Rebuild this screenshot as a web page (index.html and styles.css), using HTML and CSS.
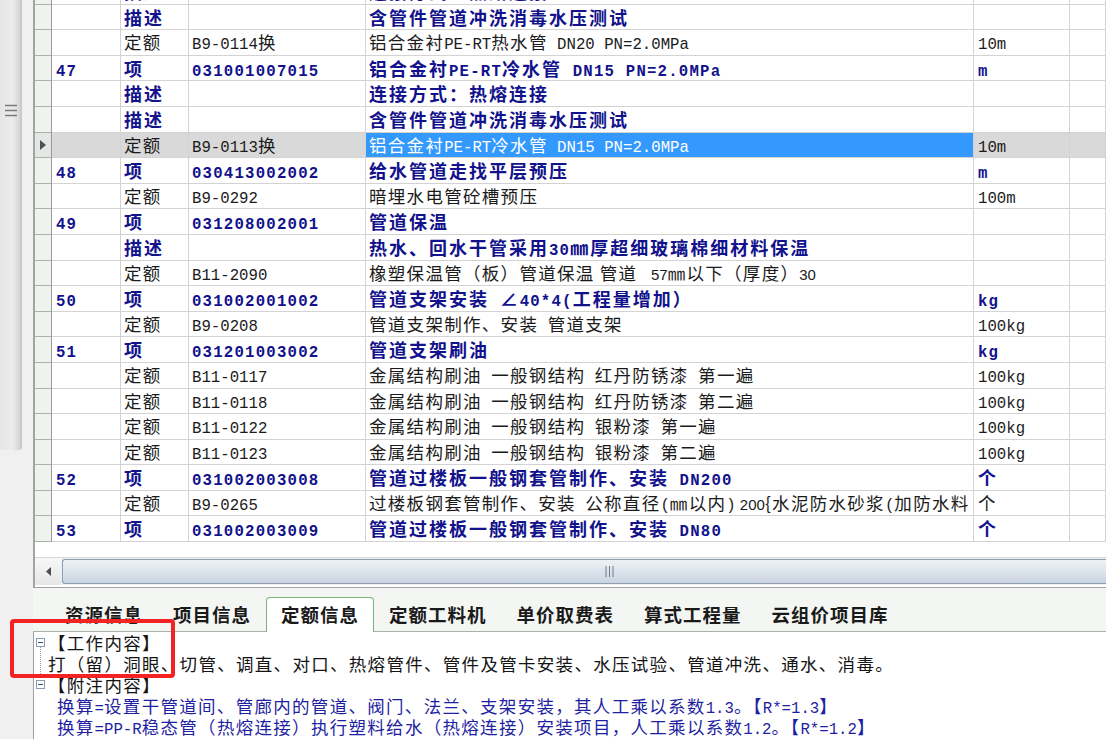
FILE: index.html
```html
<!DOCTYPE html>
<html lang="zh-CN">
<head>
<meta charset="utf-8">
<title>定额信息</title>
<link rel="stylesheet" href="styles.css">
</head>
<body>
<div class="app">
  <aside class="side">
    <div class="side-panel">
      <svg class="grip" width="12" height="13" viewBox="0 0 12 13"><path d="M0 1.5H12M0 6.5H12M0 11.5H12" stroke="#7a7a7a" stroke-width="1.4"/></svg>
    </div>
  </aside>
  <main class="main">
    <section class="grid-panel">
      <div class="grid">
        <div class="row"><div class="c h"></div><div class="c n"></div><div class="c t b">描述</div><div class="c k"></div><div class="c d b">连接方式：热熔连接</div><div class="c u"></div><div class="c x"></div></div>
        <div class="row"><div class="c h"></div><div class="c n"></div><div class="c t b">描述</div><div class="c k"></div><div class="c d b">含管件管道冲洗消毒水压测试</div><div class="c u"></div><div class="c x"></div></div>
        <div class="row"><div class="c h"></div><div class="c n"></div><div class="c t">定额</div><div class="c k"><span class="m">B9-0114</span>换</div><div class="c d">铝合金衬<span class="m">PE-RT</span>热水管<span class="m"> DN20 PN=2.0MPa</span></div><div class="c u"><span class="m">10m</span></div><div class="c x"></div></div>
        <div class="row"><div class="c h"></div><div class="c n b"><span class="m">47</span></div><div class="c t b">项</div><div class="c k b"><span class="m">031001007015</span></div><div class="c d b">铝合金衬<span class="m">PE-RT</span>冷水管<span class="m"> DN15 PN=2.0MPa</span></div><div class="c u b"><span class="m">m</span></div><div class="c x"></div></div>
        <div class="row"><div class="c h"></div><div class="c n"></div><div class="c t b">描述</div><div class="c k"></div><div class="c d b">连接方式：热熔连接</div><div class="c u"></div><div class="c x"></div></div>
        <div class="row"><div class="c h"></div><div class="c n"></div><div class="c t b">描述</div><div class="c k"></div><div class="c d b">含管件管道冲洗消毒水压测试</div><div class="c u"></div><div class="c x"></div></div>
        <div class="row sel"><div class="c h"><svg width="6" height="10" viewBox="0 0 6 10"><path d="M0 0L6 5L0 10Z" fill="#505050"/></svg></div><div class="c n"></div><div class="c t">定额</div><div class="c k"><span class="m">B9-0113</span>换</div><div class="c d">铝合金衬<span class="m">PE-RT</span>冷水管<span class="m"> DN15 PN=2.0MPa</span></div><div class="c u"><span class="m">10m</span></div><div class="c x"></div></div>
        <div class="row"><div class="c h"></div><div class="c n b"><span class="m">48</span></div><div class="c t b">项</div><div class="c k b"><span class="m">030413002002</span></div><div class="c d b">给水管道走找平层预压</div><div class="c u b"><span class="m">m</span></div><div class="c x"></div></div>
        <div class="row"><div class="c h"></div><div class="c n"></div><div class="c t">定额</div><div class="c k"><span class="m">B9-0292</span></div><div class="c d">暗埋水电管砼槽预压</div><div class="c u"><span class="m">100m</span></div><div class="c x"></div></div>
        <div class="row"><div class="c h"></div><div class="c n b"><span class="m">49</span></div><div class="c t b">项</div><div class="c k b"><span class="m">031208002001</span></div><div class="c d b">管道保温</div><div class="c u"></div><div class="c x"></div></div>
        <div class="row"><div class="c h"></div><div class="c n"></div><div class="c t b">描述</div><div class="c k"></div><div class="c d b">热水、回水干管采用<span class="m">30</span>㎜厚超细玻璃棉细材料保温</div><div class="c u"></div><div class="c x"></div></div>
        <div class="row"><div class="c h"></div><div class="c n"></div><div class="c t">定额</div><div class="c k"><span class="m">B11-2090</span></div><div class="c d">橡塑保温管（板）管道保温 管道 <span class="s">  57</span>㎜以下（厚度）<span class="s">30</span></div><div class="c u"></div><div class="c x"></div></div>
        <div class="row"><div class="c h"></div><div class="c n b"><span class="m">50</span></div><div class="c t b">项</div><div class="c k b"><span class="m">031002001002</span></div><div class="c d b">管道支架安装<span class="m"> </span>∠<span class="m">40*4(</span>工程量增加）</div><div class="c u b"><span class="m">kg</span></div><div class="c x"></div></div>
        <div class="row"><div class="c h"></div><div class="c n"></div><div class="c t">定额</div><div class="c k"><span class="m">B9-0208</span></div><div class="c d">管道支架制作、安装<span class="m"> </span>管道支架</div><div class="c u"><span class="m">100kg</span></div><div class="c x"></div></div>
        <div class="row"><div class="c h"></div><div class="c n b"><span class="m">51</span></div><div class="c t b">项</div><div class="c k b"><span class="m">031201003002</span></div><div class="c d b">管道支架刷油</div><div class="c u b"><span class="m">kg</span></div><div class="c x"></div></div>
        <div class="row"><div class="c h"></div><div class="c n"></div><div class="c t">定额</div><div class="c k"><span class="m">B11-0117</span></div><div class="c d">金属结构刷油<span class="m"> </span>一般钢结构<span class="m"> </span>红丹防锈漆<span class="m"> </span>第一遍</div><div class="c u"><span class="m">100kg</span></div><div class="c x"></div></div>
        <div class="row"><div class="c h"></div><div class="c n"></div><div class="c t">定额</div><div class="c k"><span class="m">B11-0118</span></div><div class="c d">金属结构刷油<span class="m"> </span>一般钢结构<span class="m"> </span>红丹防锈漆<span class="m"> </span>第二遍</div><div class="c u"><span class="m">100kg</span></div><div class="c x"></div></div>
        <div class="row"><div class="c h"></div><div class="c n"></div><div class="c t">定额</div><div class="c k"><span class="m">B11-0122</span></div><div class="c d">金属结构刷油<span class="m"> </span>一般钢结构<span class="m"> </span>银粉漆<span class="m"> </span>第一遍</div><div class="c u"><span class="m">100kg</span></div><div class="c x"></div></div>
        <div class="row"><div class="c h"></div><div class="c n"></div><div class="c t">定额</div><div class="c k"><span class="m">B11-0123</span></div><div class="c d">金属结构刷油<span class="m"> </span>一般钢结构<span class="m"> </span>银粉漆<span class="m"> </span>第二遍</div><div class="c u"><span class="m">100kg</span></div><div class="c x"></div></div>
        <div class="row"><div class="c h"></div><div class="c n b"><span class="m">52</span></div><div class="c t b">项</div><div class="c k b"><span class="m">031002003008</span></div><div class="c d b">管道过楼板一般钢套管制作、安装<span class="m"> DN200</span></div><div class="c u b">个</div><div class="c x"></div></div>
        <div class="row"><div class="c h"></div><div class="c n"></div><div class="c t">定额</div><div class="c k"><span class="m">B9-0265</span></div><div class="c d">过楼板钢套管制作、安装<span class="m"> </span>公称直径<span class="m">(</span>㎜以内<span class="m">)</span><span class="s"> 200</span>{水泥防水砂浆<span class="m">(</span>加防水料</div><div class="c u">个</div><div class="c x"></div></div>
        <div class="row"><div class="c h"></div><div class="c n b"><span class="m">53</span></div><div class="c t b">项</div><div class="c k b"><span class="m">031002003009</span></div><div class="c d b">管道过楼板一般钢套管制作、安装<span class="m"> DN80</span></div><div class="c u b">个</div><div class="c x"></div></div>
      </div>
      <div class="hscroll">
        <div class="hs-btn"><svg width="5" height="9" viewBox="0 0 5 9"><path d="M5 0L0 4.5L5 9Z" fill="#4c4c4c"/></svg></div>
        <div class="hs-thumb"><svg width="9" height="11" viewBox="0 0 9 11"><path d="M1 0V11M4.5 0V11M8 0V11" stroke="#6d7b8a" stroke-width="1"/></svg></div>
      </div>
    </section>
    <nav class="tabs">
      <div class="tab">资源信息</div>
      <div class="tab">项目信息</div>
      <div class="tab on">定额信息</div>
      <div class="tab">定额工料机</div>
      <div class="tab">单价取费表</div>
      <div class="tab">算式工程量</div>
      <div class="tab">云组价项目库</div>
    </nav>
    <section class="info">
      <div class="tline"><svg class="tog" width="9" height="9" viewBox="0 0 9 9"><rect x="0.5" y="0.5" width="8" height="8" fill="#fff" stroke="#8b9bb0"/><path d="M2 4.5H7" stroke="#33507a"/></svg>【工作内容】</div>
      <div class="tline sub">打（留）洞眼、切管、调直、对口、热熔管件、管件及管卡安装、水压试验、管道冲洗、通水、消毒。</div>
      <div class="tline"><svg class="tog" width="9" height="9" viewBox="0 0 9 9"><rect x="0.5" y="0.5" width="8" height="8" fill="#fff" stroke="#8b9bb0"/><path d="M2 4.5H7" stroke="#33507a"/></svg>【附注内容】</div>
      <div class="tline blue">换算<span class="m">=</span>设置干管道间、管廊内的管道、阀门、法兰、支架安装，其人工乘以系数<span class="m">1.3</span>。【<span class="m">R*=1.3</span>】</div>
      <div class="tline blue">换算<span class="m">=PP-R</span>稳态管（热熔连接）执行塑料给水（热熔连接）安装项目，人工乘以系数<span class="m">1.2</span>。【<span class="m">R*=1.2</span>】</div>
      <div class="tline blue">换算<span class="m">=</span>铝合金衬塑料给水管（热熔连接）执行塑料给水管（热熔连接）安装项目，人工乘以系数<span class="m">1.2</span>。【<span class="m">R*=1.2</span>】</div>
    </section>
  </main>
</div>
<div class="mark"></div>
</body>
</html>
```
FILE: styles.css
```css
html, body {
  margin: 0;
  padding: 0;
}
body {
  width: 1106px;
  height: 739px;
  overflow: hidden;
  background: #f0f0f0;
  font-family: "Noto Sans CJK SC", "Liberation Sans", sans-serif;
  position: relative;
}
.app {
  display: flex;
  height: 739px;
}
.side {
  width: 33px;
  flex: none;
  background: #f0f0f0;
}
.side-panel {
  width: 22px;
  height: 450px;
  box-sizing: border-box;
  padding-top: 104px;
  display: flex;
  justify-content: center;
  align-items: flex-start;
  background: linear-gradient(to right, #e5e5e5 0, #ececec 55%, #dcdcdc 82%, #c4c4c4 100%);
  border-bottom-right-radius: 3px;
}
.main {
  flex: 1;
  min-width: 0;
  display: flex;
  flex-direction: column;
}
.grid-panel {
  height: 588px;
  flex: none;
  box-sizing: border-box;
  border-left: 2px solid #a4a4a4;
  border-bottom: 1px solid #a0a0a0;
  background: #fff;
  display: flex;
  flex-direction: column;
  overflow: hidden;
}
.grid {
  flex: none;
  margin-top: -21px;
}
.row {
  display: grid;
  grid-template-columns: 17px 69px 68px 177px 608px 96px 1fr;
  height: 25.6px;
}
.c {
  box-sizing: border-box;
  border-right: 1px solid #d3d3d3;
  border-bottom: 1px solid #d3d3d3;
  padding-left: 3px;
  white-space: nowrap;
  overflow: hidden;
  line-height: 24px;
  font-size: 17.5px;
  letter-spacing: 1.3px;
  color: #1b1b1b;
}
.h {
  background: #eef3ee;
  border-right-color: #9a9a9a;
  border-bottom-color: #aab0aa;
  padding: 0;
  display: flex;
  align-items: center;
  justify-content: center;
}
.n, .u {
  padding-left: 4px;
}
.b {
  font-weight: 700;
  font-size: 18px;
  letter-spacing: 2px;
  color: #12128c;
}
.m {
  font-family: "Liberation Mono", monospace;
  font-size: 15.7px;
  letter-spacing: 0;
  white-space: pre;
}
.b .m {
  letter-spacing: 1.2px;
  font-weight: 700;
}
.s {
  font-family: "Liberation Sans", sans-serif;
  font-size: 15px;
  letter-spacing: 0;
  white-space: pre;
}
.row.sel .c {
  background: #d9d9d9;
}
.row.sel .h {
  background: #e4e8e4;
}
.row.sel .d {
  background: #3399ff;
  color: #fff;
}
.hscroll {
  margin-top: auto;
  margin-bottom: 2px;
  height: 28px;
  flex: none;
  display: flex;
  background: #eef1f4;
  border-top: 1px solid #d6d6d6;
  box-sizing: border-box;
}
.hs-btn {
  width: 26px;
  flex: none;
  display: flex;
  align-items: center;
  justify-content: center;
  background: linear-gradient(#f8f8f8, #e6e6e6);
}
.hs-thumb {
  flex: 1;
  margin: 1px 0 1px 1px;
  border: 1px solid #8e9eb0;
  border-right: none;
  border-radius: 3px 0 0 3px;
  background: linear-gradient(#eef2f6 0, #dde4ec 50%, #c9d3de 100%);
  display: flex;
  align-items: center;
  padding-left: 542px;
}
.tabs {
  height: 44px;
  flex: none;
  box-sizing: border-box;
  background: #f3f6f3;
  border-bottom: 1px solid #a9b2a9;
  display: flex;
  align-items: flex-end;
  padding-left: 17px;
}
.tab {
  height: 34px;
  line-height: 34px;
  padding: 0 15px;
  box-sizing: border-box;
  font-size: 18.5px;
  font-weight: 700;
  letter-spacing: 1px;
  color: #1a1a1a;
  white-space: nowrap;
}
.tab.on {
  height: 35px;
  line-height: 33px;
  padding: 0 14px;
  margin-bottom: -1px;
  background: #fff;
  border: 1px solid #79b479;
  border-bottom: none;
  border-radius: 4px 4px 0 0;
}
.info {
  flex: 1;
  background: #fff;
  border-left: 1px solid #a0a0a0;
  padding-left: 14px;
  overflow: hidden;
}
.tline {
  position: relative;
  height: 21px;
  line-height: 21px;
  white-space: nowrap;
  font-size: 17.5px;
  letter-spacing: 1.3px;
  color: #141414;
}
.tline .m {
  line-height: 1;
}
.tog {
  display: inline-block;
  vertical-align: middle;
  margin-left: -12px;
  margin-right: 3px;
  position: relative;
  top: -3px;
}
.sub::before {
  content: "";
  position: absolute;
  left: -8px;
  top: -6px;
  bottom: -4px;
  border-left: 1px dotted #9a9a9a;
}
.blue {
  padding-left: 9px;
  color: #1f1fa3;
}
.mark {
  position: absolute;
  left: 10px;
  top: 619px;
  width: 165px;
  height: 59px;
  box-sizing: border-box;
  border: 4px solid #f42323;
  border-radius: 4px;
}
```
